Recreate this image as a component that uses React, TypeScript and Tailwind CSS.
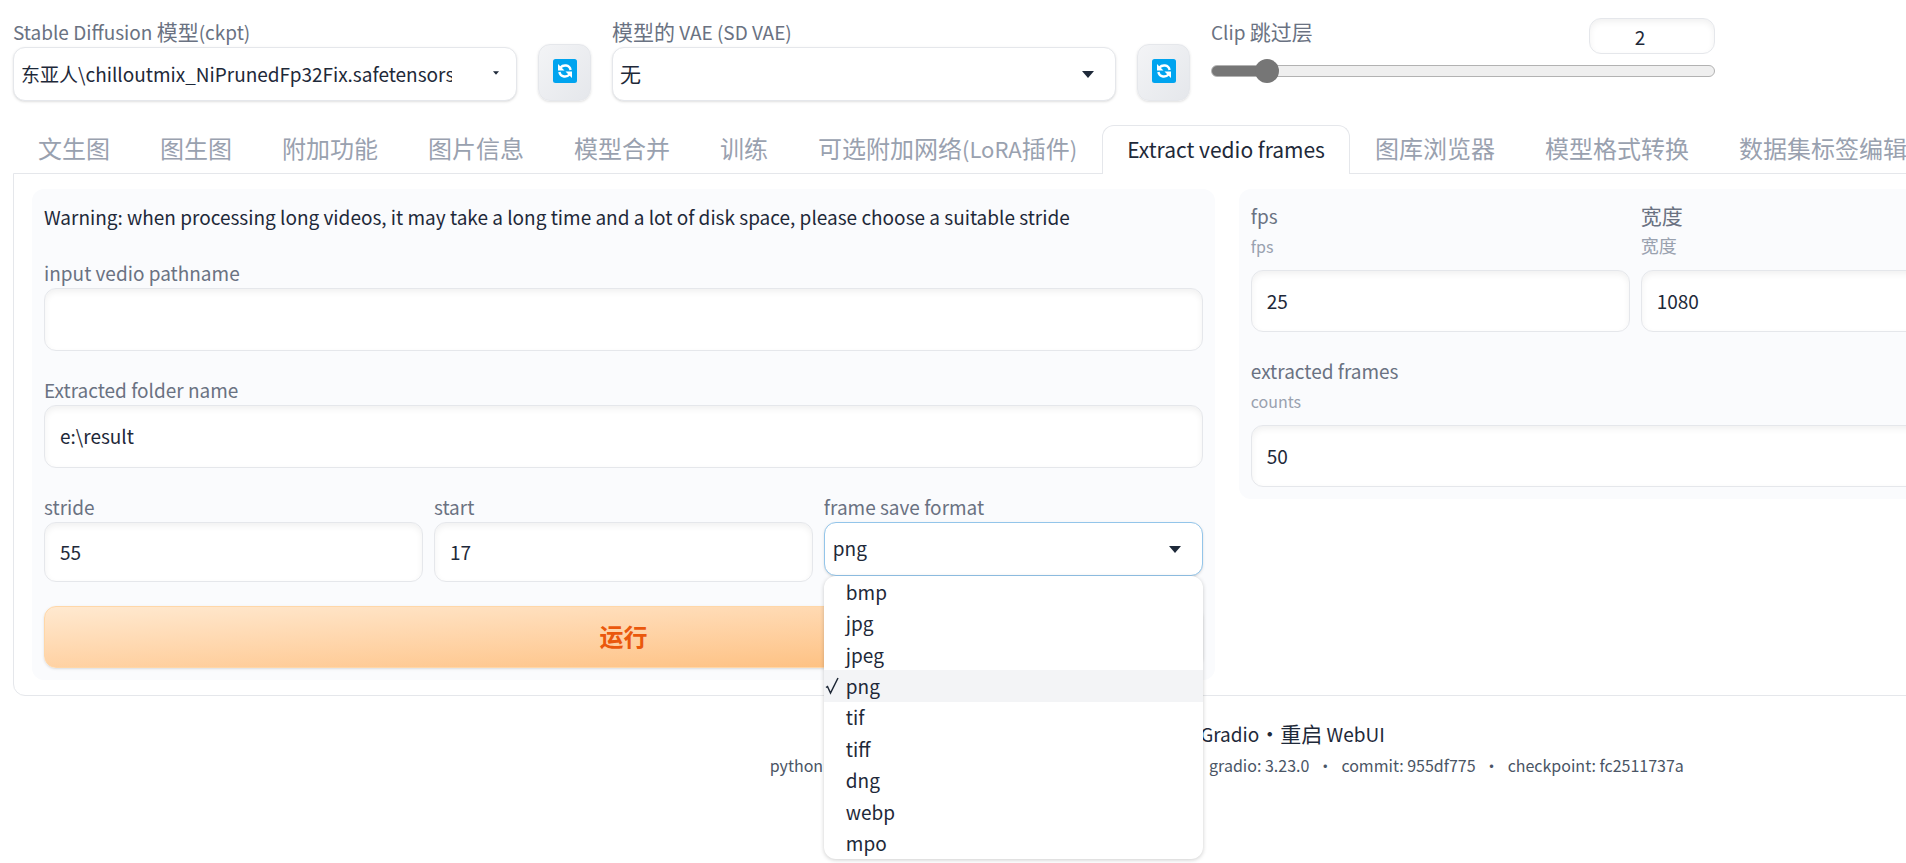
import { useState } from "react";
import type { ReactNode } from "react";

const TABS = [
  { id: "txt2img", label: "文生图" },
  { id: "img2img", label: "图生图" },
  { id: "extras", label: "附加功能" },
  { id: "pnginfo", label: "图片信息" },
  { id: "merge", label: "模型合并" },
  { id: "train", label: "训练" },
  { id: "lora", label: <>可选附加网络<span className="text-[22px]">(LoRA</span>插件<span className="text-[22px]">)</span></> },
  { id: "extract", label: <span className="text-[21px]">Extract vedio frames</span> },
  { id: "gallery", label: "图库浏览器" },
  { id: "convert", label: "模型格式转换" },
  { id: "tags", label: "数据集标签编辑" },
];

const FORMATS = ["bmp", "jpg", "jpeg", "png", "tif", "tiff", "dng", "webp", "mpo"];

const LABEL = "block h-[30px] text-[21px] leading-7 text-gray-500";

const INPUT =
  "block w-full rounded-xl border border-gray-200 bg-white px-[15px] pb-[2px] text-[19px] text-gray-800 shadow-[inset_0_3px_6px_rgba(0,0,0,0.06)] outline-none";

function Latin({ children }: { children: ReactNode }) {
  return <span className="text-[19px]">{children}</span>;
}

function Arrow({ small }: { small?: boolean }) {
  return (
    <svg
      viewBox="0 0 12 7"
      className={
        small
          ? "pointer-events-none absolute right-[18px] top-6 h-1 w-[6px] fill-gray-800"
          : "pointer-events-none absolute right-[22px] top-6 h-[7px] w-3 fill-gray-800"
      }
    >
      <path d="M0 0h12L6 7z" />
    </svg>
  );
}

function RefreshButton({ label }: { label: string }) {
  return (
    <button
      type="button"
      aria-label={label}
      className="flex h-[57px] w-[53px] shrink-0 items-center justify-center rounded-xl border border-gray-200 bg-gradient-to-br from-gray-100 to-gray-200 pb-1 shadow-sm"
    >
      <svg viewBox="0 0 24 24" className="size-6">
        <rect width="24" height="24" rx="2.5" fill="#00a4ef" />
        <path
          d="M7.5 8.5C10 5.6 16.5 5.4 17.6 11M16.5 15.5C14 18.4 7.5 18.6 6.4 13"
          fill="none"
          stroke="#fff"
          strokeWidth="2.4"
        />
        <path d="M5 5v6.5h6.5zM19 19v-6.5h-6.5z" fill="#fff" />
      </svg>
    </button>
  );
}

function Field({
  id,
  label,
  info,
  value,
  type = "text",
  className = "",
}: {
  id: string;
  label: ReactNode;
  info?: ReactNode;
  value: string;
  type?: string;
  className?: string;
}) {
  const height = type === "text" ? "h-[63px]" : info ? "h-[62px]" : "h-[60px]";

  return (
    <div className={className}>
      <label htmlFor={id} className={LABEL}>
        {label}
      </label>
      {info && <p className="mb-[9px] h-[30px] text-lg leading-7 text-gray-400">{info}</p>}
      <input
        id={id}
        type="text"
        inputMode={type === "number" ? "numeric" : undefined}
        defaultValue={value}
        className={`${INPUT} ${height}`}
      />
    </div>
  );
}

export default function App() {
  const [activeTab, setActiveTab] = useState("extract");
  const [format, setFormat] = useState("png");
  const [isOpen, setIsOpen] = useState(true);
  const [clipSkip, setClipSkip] = useState(2);

  const fill = ((clipSkip - 1) / 11) * 100;

  return (
    <div className="min-h-screen overflow-hidden bg-white font-['Noto_Sans_CJK_SC',sans-serif] text-gray-800">
      <div className="w-9/7 pb-20 pl-[13px] pr-[10px] pt-[17px]">
        {/* Quick settings */}
        <div className="flex items-end gap-[21px]">
          <div className="w-[504px]">
            <label htmlFor="ckpt" className={LABEL}>
              <Latin>Stable Diffusion </Latin>模型<Latin>(ckpt)</Latin>
            </label>
            <div className="relative">
              <select
                id="ckpt"
                className="block h-[54px] w-full appearance-none rounded-xl border border-gray-200 bg-white pl-[7px] pr-16 text-[19px] shadow-sm"
              >
                <option>东亚人\chilloutmix_NiPrunedFp32Fix.safetensors [fc2511737a]</option>
              </select>
              <Arrow small />
            </div>
          </div>
          <RefreshButton label="刷新模型" />

          <div className="w-[504px]">
            <label htmlFor="vae" className={LABEL}>
              模型的<Latin> VAE (SD VAE)</Latin>
            </label>
            <div className="relative">
              <select
                id="vae"
                className="block h-[54px] w-full appearance-none rounded-xl border border-gray-200 bg-white px-[7px] text-[21px] shadow-sm"
              >
                <option>无</option>
              </select>
              <Arrow />
            </div>
          </div>
          <RefreshButton label="刷新 VAE" />

          <div className="w-[504px] self-start">
            <div className="flex items-start justify-between">
              <label htmlFor="clip" className={LABEL}>
                <Latin>Clip </Latin>跳过层
              </label>
              <input
                type="text"
                aria-label="Clip 跳过层"
                value={clipSkip}
                onChange={(e) => setClipSkip(Number(e.target.value) || 1)}
                className="mt-px h-9 w-[126px] rounded-xl border border-gray-200 pr-6 text-center text-[19px] shadow-[inset_0_3px_6px_rgba(0,0,0,0.06)] outline-none"
              />
            </div>
            <input
              id="clip"
              type="range"
              min={1}
              max={12}
              value={clipSkip}
              onChange={(e) => setClipSkip(Number(e.target.value))}
              style={{
                backgroundImage: `linear-gradient(to right, #767676 ${fill}%, transparent ${fill}%)`,
              }}
              className="mt-[11px] block h-3 w-full appearance-none rounded-full border border-[#b2b2b2] bg-[#efefef] [&::-webkit-slider-thumb]:size-6 [&::-webkit-slider-thumb]:appearance-none [&::-webkit-slider-thumb]:rounded-full [&::-webkit-slider-thumb]:bg-[#767676]"
            />
          </div>
        </div>

        {/* Tabs */}
        <div role="tablist" className="relative z-10 -mb-px mt-6 flex">
          {TABS.map((tab) => (
            <button
              key={tab.id}
              type="button"
              role="tab"
              aria-selected={tab.id === activeTab}
              onClick={() => setActiveTab(tab.id)}
              className={`h-[49px] shrink-0 whitespace-nowrap rounded-t-xl border border-b-0 px-6 pb-1 text-2xl ${
                tab.id === activeTab
                  ? "border-gray-200 bg-white text-gray-800"
                  : "border-transparent text-gray-400"
              }`}
            >
              {tab.label}
            </button>
          ))}
        </div>

        <div className="flex items-start gap-6 rounded-b-xl border border-gray-200 px-[18px] py-[15px]">
          {/* Extraction settings */}
          <div className="flex min-w-0 flex-1 flex-col gap-6 rounded-xl bg-[#fafbfd] p-3">
            <p className="h-[33px] text-[19px] leading-8">
              Warning: when processing long videos, it may take a long time and a lot of disk space,
              please choose a suitable stride
            </p>
            <Field id="path" label={<Latin>input vedio pathname</Latin>} value="" />
            <Field id="folder" label={<Latin>Extracted folder name</Latin>} value="e:\result" />

            <div className="grid grid-cols-3 gap-[11px]">
              <Field id="stride" type="number" label={<Latin>stride</Latin>} value="55" />
              <Field id="start" type="number" label={<Latin>start</Latin>} value="17" />
              <div>
                <label htmlFor="format" className={LABEL}>
                  <Latin>frame save format</Latin>
                </label>
                <div className="relative">
                  <select
                    id="format"
                    value={format}
                    onChange={(e) => setFormat(e.target.value)}
                    onMouseDown={(e) => {
                      e.preventDefault();
                      setIsOpen(!isOpen);
                    }}
                    className="block h-[54px] w-full appearance-none rounded-xl border border-[#93c5ea] bg-white px-2 pb-[2px] text-[19px] shadow-sm outline-none"
                  >
                    {FORMATS.map((f) => (
                      <option key={f}>{f}</option>
                    ))}
                  </select>
                  <Arrow />
                  {isOpen && (
                    <ul
                      role="listbox"
                      aria-label="frame save format"
                      className="absolute inset-x-0 top-full z-20 flex h-[283px] flex-col overflow-hidden rounded-xl bg-white shadow-[0_1px_4px_rgba(0,0,0,0.2)]"
                    >
                      {FORMATS.map((f) => (
                        <li
                          key={f}
                          role="option"
                          aria-selected={f === format}
                          onClick={() => {
                            setFormat(f);
                            setIsOpen(false);
                          }}
                          className={`flex flex-1 items-center text-[19px] leading-7 ${
                            f === format ? "bg-gray-100" : ""
                          }`}
                        >
                          <span className="w-[22px] pl-px">
                            {f === format && (
                              <svg viewBox="0 0 14 18" className="h-[18px] w-[14px]" fill="none">
                                <path d="M1 10.5l1.5-1L5.5 16 13 1" stroke="#1f2937" strokeWidth="1.5" />
                              </svg>
                            )}
                          </span>
                          {f}
                        </li>
                      ))}
                    </ul>
                  )}
                </div>
              </div>
            </div>

            <button
              type="button"
              className="h-[62px] rounded-xl border border-orange-200 bg-gradient-to-br from-[#ffe9d0] to-[#fdba74] pb-[2px] text-2xl font-bold text-[#ea580c] shadow-sm"
            >
              运行
            </button>
          </div>

          {/* Video info */}
          <div className="grid min-w-0 flex-1 grid-cols-3 gap-x-[11px] gap-y-6 rounded-xl bg-[#fafbfd] p-3">
            <Field id="fps" type="number" label={<Latin>fps</Latin>} info={<span className="text-base">fps</span>} value="25" />
            <Field id="width" type="number" label="宽度" info="宽度" value="1080" />
            <Field
              id="frames"
              type="number"
              label={<Latin>extracted frames</Latin>}
              info={<span className="text-base">counts</span>}
              value="50"
              className="col-span-3"
            />
          </div>
        </div>

        <footer className="mt-[22px] text-center">
          <div className="h-8 text-[21px] leading-[30px]">
            <a href="#api"><Latin>API</Latin></a>・<a href="#github"><Latin>Github</Latin></a>・
            <a href="#gradio"><Latin>Gradio</Latin></a>・
            <a href="#reload">重启<Latin> WebUI</Latin></a>
          </div>
          <div className="flex justify-center gap-2 text-base leading-[30px] text-gray-600">
            <span>python: 3.10.8</span>
            <span>•</span>
            <span>torch: 2.0.0+cu118</span>
            <span>•</span>
            <span>xformers: N/A</span>
            <span>•</span>
            <span>gradio: 3.23.0</span>
            <span>•</span>
            <span>commit: 955df775</span>
            <span>•</span>
            <span>checkpoint: fc2511737a</span>
          </div>
        </footer>
      </div>
    </div>
  );
}
